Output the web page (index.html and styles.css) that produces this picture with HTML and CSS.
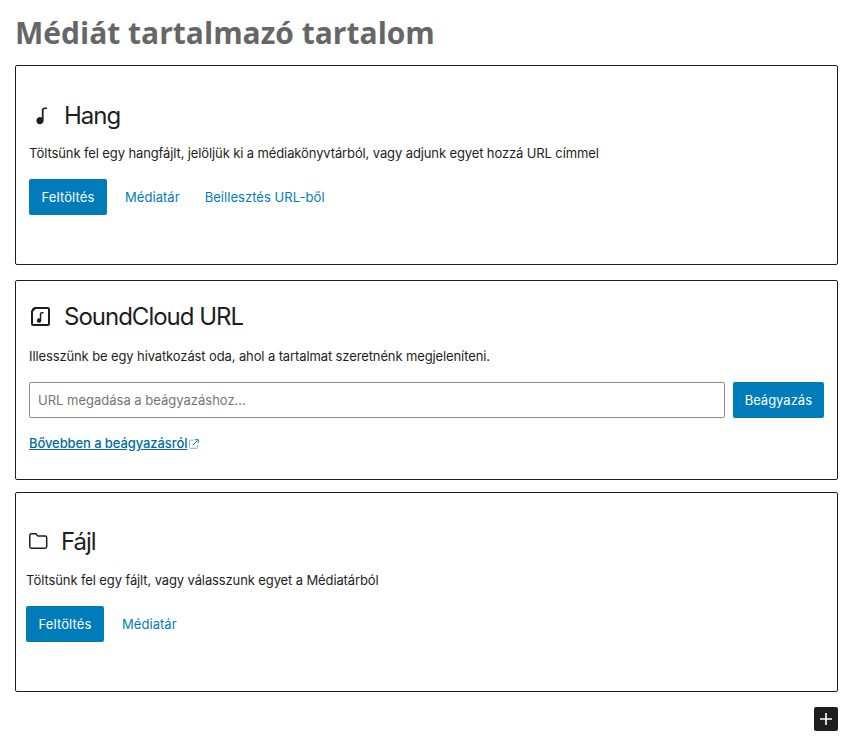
FILE: index.html
```html
<!DOCTYPE html>
<html lang="hu">
<head>
  <meta charset="UTF-8" />
  <meta name="viewport" content="width=device-width, initial-scale=1.0" />
  <title>Médiát tartalmazó tartalom</title>
  <link rel="stylesheet" href="styles.css">
</head>
<body>
  <h1 class="page-title">Médiát tartalmazó tartalom</h1>

  <!-- Audio block -->
  <section class="placeholder placeholder-audio">
    <div class="placeholder-label">
      <svg class="placeholder-icon" viewBox="0 0 24 24"><path d="M14.6 6.5c0-1 .6-1.5 1.5-1.5H18V3.4h-2.2c-1.9 0-3 1.1-3 3v7.1a3.6 3.6 0 1 0 1.8 3z"/></svg>
      Hang
    </div>
    <p class="placeholder-text">Töltsünk fel egy hangfájlt, jelöljük ki a médiakönyvtárból, vagy adjunk egyet hozzá URL címmel</p>
    <div class="placeholder-actions">
      <button class="btn-primary btn-upload" type="button">Feltöltés</button>
      <button class="btn-link" type="button">Médiatár</button>
      <button class="btn-link" type="button">Beillesztés URL-ből</button>
    </div>
  </section>

  <!-- Embed block -->
  <section class="placeholder placeholder-embed">
    <div class="placeholder-label">
      <svg class="placeholder-icon" viewBox="0 0 24 24"><path d="M5.5 3h13A1.5 1.5 0 0 1 20 4.500v14a1.500 1.500 0 0 1-1.500 1.500h-14A1.500 1.500 0 0 1 3 18.500V6z" fill="none" stroke="#1e1e1e" stroke-width="2"/><path d="M3 7V4.500A1.500 1.500 0 0 1 4.500 3H8z"/><path d="M12.300 8.200v7.300a2.200 2.200 0 1 1-1.500-2.100V9.300c0-1.400.8-2.200 2.200-2.200h1.500v1.500h-1.300c-.6 0-.9 0-.9.600z"/></svg>
      SoundCloud URL
    </div>
    <p class="placeholder-text">Illesszünk be egy hivatkozást oda, ahol a tartalmat szeretnénk megjeleníteni.</p>
    <form class="embed-form">
      <input class="embed-input" type="text" placeholder="URL megadása a beágyazáshoz...">
      <button class="btn-primary" type="button">Beágyazás</button>
    </form>
    <a class="embed-learn" href="#">Bővebben a beágyazásról</a><svg class="external-icon" viewBox="0 0 10 10"><path d="M4.500 1.200H1.300C.8 1.200.5 1.500.5 2v6.500c0 .5.3.8.8.8h6.500c.5 0 .8-.3.8-.8V5.500" fill="none" stroke="#7fb6d6" stroke-width="1"/><path d="M4 6 8.600 1.400M5.800.7h3.500v3.500" fill="none" stroke="#0c7db4" stroke-width="1"/></svg>
  </section>

  <!-- File block -->
  <section class="placeholder placeholder-file">
    <div class="placeholder-label">
      <svg class="placeholder-icon" viewBox="0 0 24 24"><path d="M3.800 5.400c0-.9.7-1.600 1.600-1.600h4.400l2.100 2.300h7.200c.9 0 1.600.7 1.600 1.600v8.900c0 .9-.7 1.600-1.600 1.600H5.400c-.9 0-1.600-.7-1.600-1.600z" fill="none" stroke="#1e1e1e" stroke-width="1.500"/></svg>
      Fájl
    </div>
    <p class="placeholder-text">Töltsünk fel egy fájlt, vagy válasszunk egyet a Médiatárból</p>
    <div class="placeholder-actions">
      <button class="btn-primary btn-upload" type="button">Feltöltés</button>
      <button class="btn-link" type="button">Médiatár</button>
    </div>
  </section>

  <div class="inserter-row">
    <button class="inserter" type="button" aria-label="Blokk hozzáadása">
      <svg viewBox="0 0 24 24"><path d="M18 11.200h-5.200V6h-1.600v5.200H6v1.600h5.200V18h1.600v-5.200H18z"/></svg>
    </button>
  </div>
</body>
</html>
```

FILE: styles.css
```css
body {
  margin: 0;
  padding: 0 16px 0 15px;
  font-family: Inter, 'Liberation Sans', sans-serif;
  font-size: 13px;
  color: #1e1e1e;
  background: #ffffff;
}

.page-title {
  margin: 0 0 11px;
  padding-top: 12px;
  font-family: 'Open Sans', 'Noto Sans', sans-serif;
  font-size: 30px;
  line-height: 42px;
  font-weight: 700;
  color: #666666;
}

.placeholder {
  box-sizing: border-box;
  height: 200px;
  margin-bottom: 15px;
  padding: 36px 13px 0;
  border: 1px solid #1e1e1e;
  border-radius: 2px;
}

.placeholder-embed {
  margin-bottom: 12px;
  padding-top: 22px;
}

.placeholder-file {
  margin-bottom: 15px;
  padding: 35px 10px 0;
}

.placeholder-label {
  display: flex;
  align-items: center;
  height: 28px;
  font-size: 24px;
  line-height: 28px;
  letter-spacing: -1px;
}

.placeholder-icon {
  flex: none;
  width: 24px;
  height: 24px;
  margin-right: 11px;
  fill: #1e1e1e;
}

.placeholder-text {
  margin: 16px 0 17px;
  font-size: 13px;
  line-height: 18px;
  letter-spacing: -0.115px;
}

.placeholder-audio .placeholder-text {
  margin-top: 14px;
}

.placeholder-file .placeholder-text {
  margin-top: 15px;
}

.placeholder-actions {
  display: flex;
}

button {
  font-family: inherit;
  font-size: 13px;
  cursor: pointer;
}

.btn-primary {
  flex: none;
  height: 36px;
  padding: 0 12px;
  background: #007cba;
  color: #ffffff;
  border: none;
  border-radius: 2px;
}

.btn-upload {
  width: 78px;
  letter-spacing: 0.12px;
}

.btn-link {
  height: 36px;
  margin-left: 6px;
  padding: 0 12px;
  background: none;
  border: none;
  color: #007cba;
  letter-spacing: 0.05px;
}

.btn-link + .btn-link {
  margin-left: 1px;
}

.embed-form {
  display: flex;
  gap: 8px;
}

.embed-input {
  flex: 1;
  min-width: 0;
  box-sizing: border-box;
  height: 36px;
  padding: 0 8px;
  font-family: inherit;
  font-size: 13px;
  border: 1px solid #8d8d8d;
  border-radius: 2px;
}

.embed-input::placeholder {
  color: #757575;
}

.embed-learn {
  display: inline-block;
  margin-top: 16px;
  color: #006ba1;
  font-weight: 500;
  line-height: 18px;
  letter-spacing: -0.09px;
}

.external-icon {
  width: 10px;
  height: 10px;
  margin-left: 2px;
  vertical-align: -1px;
}

.inserter-row {
  display: flex;
  justify-content: flex-end;
}

.inserter {
  display: flex;
  width: 24px;
  height: 24px;
  padding: 0;
  background: #1e1e1e;
  border: none;
  border-radius: 2px;
}

.inserter svg {
  width: 24px;
  height: 24px;
  fill: #ffffff;
}
```
